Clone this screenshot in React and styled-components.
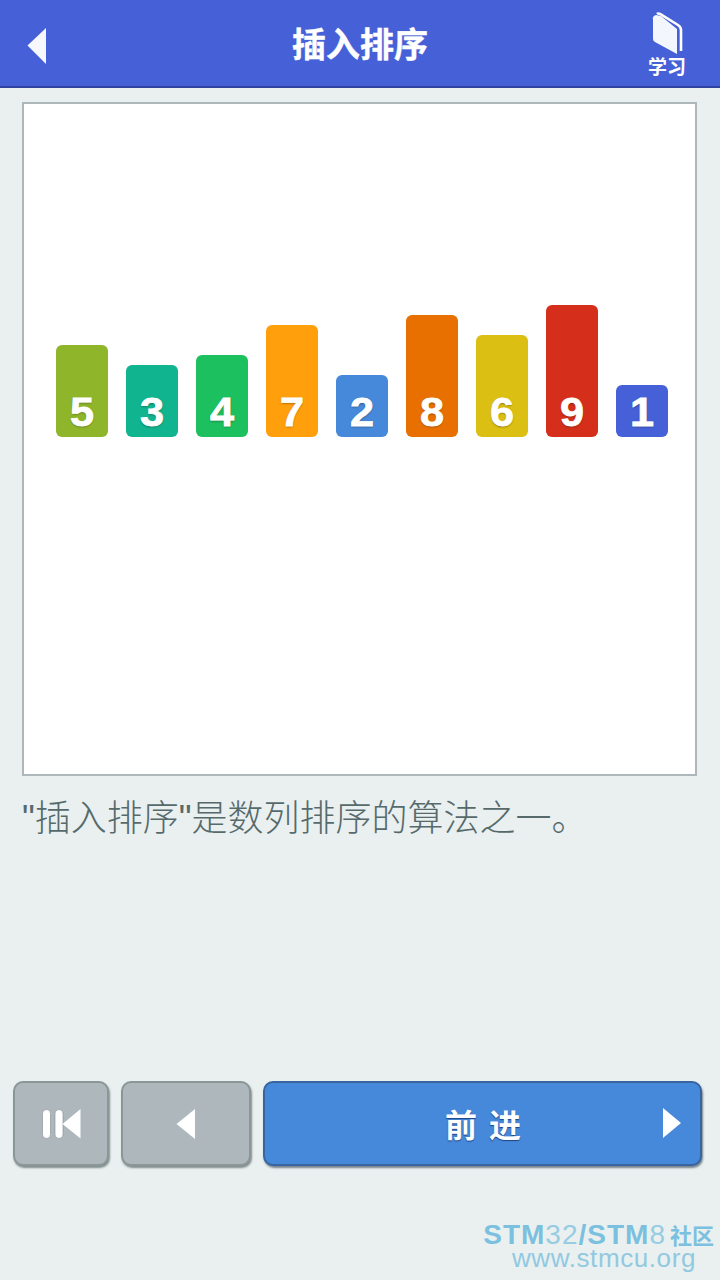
import React from 'react';
import styled, { createGlobalStyle } from 'styled-components';

const Global = createGlobalStyle`
  html, body { margin: 0; padding: 0; background: #e9f0ef; }
  body { font-family: "Noto Sans CJK SC", "Liberation Sans", sans-serif; }
`;

const Page = styled.div`
  position: relative;
  width: 720px;
  height: 1280px;
  display: flex;
  flex-direction: column;
  background: #e9f0ef;
  overflow: hidden;
`;

const Header = styled.header`
  height: 86px;
  flex: none;
  display: grid;
  grid-template-columns: 92px 1fr 92px;
  align-items: center;
  background: #4661d7;
  border-bottom: 2px solid #2f439e;
`;

const BackButton = styled.div`
  display: flex;
  padding: 5px 0 0 27px;
`;

const Title = styled.h1`
  margin: 0;
  text-align: center;
  font-size: 34px;
  line-height: 86px;
  font-weight: 700;
  color: #fff;
  -webkit-text-stroke: 0.4px #fff;
`;

const StudyButton = styled.div`
  display: flex;
  flex-direction: column;
  align-items: center;
  padding: 12px 0 0 0;
  margin-right: 14px;
  height: 86px;
  box-sizing: border-box;
`;

const StudyLabel = styled.span`
  font-size: 19px;
  line-height: 20px;
  margin-top: 1px;
  font-weight: 700;
  color: #fff;
`;

const Stage = styled.section`
  margin: 14px 23px 0 22px;
  height: 674px;
  flex: none;
  box-sizing: border-box;
  border: 2px solid #aeb7ba;
  background: #fff;
  padding-top: 201px;
`;

const Bars = styled.div`
  display: flex;
  align-items: flex-end;
  height: 132px;
  gap: 18px;
  padding-left: 32px;
`;

const Bar = styled.div`
  width: 52px;
  height: ${p => p.$value * 10 + 42}px;
  box-sizing: border-box;
  padding-bottom: 2px;
  border-radius: 6px;
  background: ${p => p.$color};
  display: flex;
  align-items: flex-end;
  justify-content: center;
`;

const Digit = styled.span`
  font-family: "Liberation Sans", Arial, sans-serif;
  font-size: 40px;
  line-height: 46px;
  font-weight: 700;
  color: #fff;
  -webkit-text-stroke: 0.8px #fff;
  text-shadow: 0 1px 2px rgba(0, 0, 0, 0.4);
  transform: scaleX(1.08);
`;

const Caption = styled.p`
  margin: 21px 0 0 22px;
  font-family: "Liberation Sans", "Noto Sans CJK SC", sans-serif;
  font-size: 36px;
  line-height: 44px;
  font-weight: 300;
  color: #566a6c;
  white-space: nowrap;
`;

const Controls = styled.div`
  margin-top: auto;
  margin-bottom: 114px;
  padding: 0 18px 0 13px;
  display: flex;
  gap: 12px;
`;

const Button = styled.div`
  height: 85px;
  box-sizing: border-box;
  border-radius: 10px;
  display: flex;
  align-items: center;
  justify-content: center;
  position: relative;
`;

const GrayButton = styled(Button)`
  width: ${p => p.$width}px;
  background: #adb7bc;
  border: 2px solid #8b9797;
  box-shadow: 1px 2px 2px rgba(85, 100, 100, 0.7);
`;

const BlueButton = styled(Button)`
  flex: 1;
  background: #4688d9;
  border: 2px solid #38659f;
  box-shadow: 1px 2px 2px rgba(70, 85, 100, 0.7);
`;

const GoLabel = styled.span`
  font-size: 32px;
  line-height: 40px;
  font-weight: 700;
  color: #fff;
  letter-spacing: 12px;
  margin-left: 13px;
  margin-top: -2px;
  text-shadow: 0 1px 1px rgba(20, 50, 110, 0.8);
`;

const GoArrow = styled.svg`
  position: absolute;
  right: 18px;
  top: 25px;
`;

const SkipIcon = styled.svg`
  margin-left: 2px;
`;

const Watermark = styled.div`
  position: absolute;
  right: 6px;
  bottom: 10px;
  display: flex;
  flex-direction: column;
  align-items: flex-end;
  color: #7cc0e0;
  font-family: "Liberation Sans", Arial, sans-serif;
`;

const WatermarkTop = styled.div`
  font-size: 28px;
  line-height: 25px;
  letter-spacing: 1px;
  white-space: nowrap;
  b { font-weight: 700; }
  span { font-weight: 400; opacity: 0.75; }
  em {
    font-style: normal;
    font-weight: 700;
    font-size: 22px;
    letter-spacing: 0;
    font-family: "Noto Sans CJK SC", sans-serif;
    margin-left: 4px;
  }
`;

const WatermarkUrl = styled.div`
  font-size: 26px;
  line-height: 23px;
  letter-spacing: 0.6px;
  margin-right: 18px;
  opacity: 0.8;
`;

const BARS = [
  [5, '#8fb62b'],
  [3, '#10b48e'],
  [4, '#1dc05f'],
  [7, '#ff9f0b'],
  [2, '#4688d9'],
  [8, '#e87001'],
  [6, '#dcbf13'],
  [9, '#d52f1c'],
  [1, '#4661d7'],
];

export default function App() {
  return (
    <Page>
      <Global />
      <Header>
        <BackButton>
          <svg width="20" height="36" viewBox="0 0 20 36">
            <path d="M19 0 L0.5 17.5 L19 36 Z" fill="#f6f8fe" />
          </svg>
        </BackButton>
        <Title>插入排序</Title>
        <StudyButton>
          <svg width="32" height="43" viewBox="0 0 32 43">
            <path d="M2 8 Q1 4 5 3 L10 4 L26 17 V42 L4 30 Q2 29 2 27 Z" fill="#f4f6fd" />
            <path d="M6 2 Q7 1 9 2 L27 13 Q30 15 30 18 V39" fill="none" stroke="#fff" strokeWidth="2.6" />
          </svg>
          <StudyLabel>学习</StudyLabel>
        </StudyButton>
      </Header>
      <Stage>
        <Bars>
          {BARS.map(([v, c]) => (
            <Bar key={v} $value={v} $color={c}><Digit>{v}</Digit></Bar>
          ))}
        </Bars>
      </Stage>
      <Caption>"插入排序"是数列排序的算法之一。</Caption>
      <Controls>
        <GrayButton $width={96}>
          <SkipIcon width="40" height="30" viewBox="0 0 40 30">
            <rect x="0.5" y="0.5" width="8" height="29" rx="4" fill="#fff" stroke="#7f8b8f" strokeWidth="0.6" />
            <rect x="13" y="0.5" width="8" height="29" rx="4" fill="#fff" stroke="#7f8b8f" strokeWidth="0.6" />
            <path d="M38.5 0 L20.5 15 L38.5 29.5 Z" fill="#fff" />
          </SkipIcon>
        </GrayButton>
        <GrayButton $width={130}>
          <svg width="20" height="30" viewBox="0 0 20 30">
            <path d="M19 0 L0.5 15 L19 30 Z" fill="#fff" />
          </svg>
        </GrayButton>
        <BlueButton>
          <GoLabel>前进</GoLabel>
          <GoArrow width="20" height="30" viewBox="0 0 20 30">
            <path d="M1 0 L19 15 L1 30 Z" fill="#fff" />
          </GoArrow>
        </BlueButton>
      </Controls>
      <Watermark>
        <WatermarkTop><b>STM</b><span>32</span><b>/STM</b><span>8</span><em>社区</em></WatermarkTop>
        <WatermarkUrl>www.stmcu.org</WatermarkUrl>
      </Watermark>
    </Page>
  );
}
